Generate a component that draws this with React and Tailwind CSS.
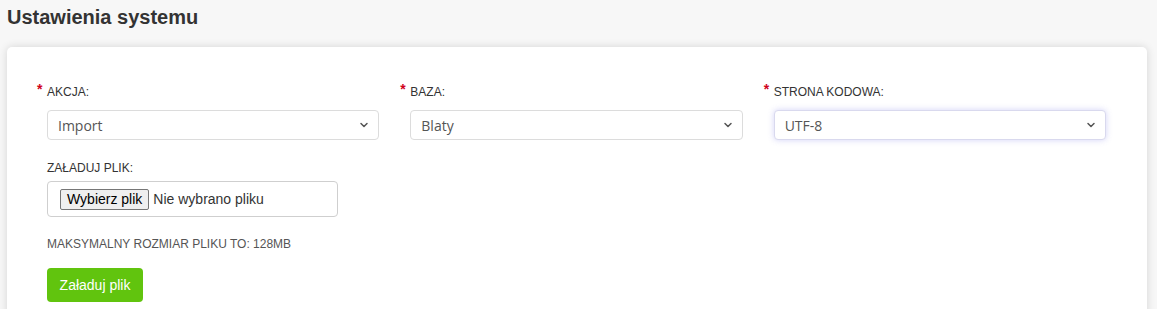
import { ChevronDown } from "lucide-react";

const fields = [
  { label: "AKCJA:", value: "Import" },
  { label: "BAZA:", value: "Blaty" },
  { label: "STRONA KODOWA:", value: "UTF-8", focused: true },
];

const SelectField = ({ label, value, focused }) => (
  <div>
    <label className="relative block text-[12px] leading-[14px] text-[#333] mb-[11px]">
      <span className="absolute -left-[10px] -top-[3px] text-[#d0021b] text-[14px] font-bold">*</span>
      {label}
    </label>
    <div
      className={
        "relative h-[30px] rounded-[4px] border bg-white flex items-center pl-[10px] " +
        (focused
          ? "border-[#d9d9ee] shadow-[0_0_6px_rgba(110,110,230,0.3)]"
          : "border-[#dcdcdc]")
      }
    >
      <span className="font-[family-name:Open_Sans,sans-serif] text-[14px] text-[#555]">{value}</span>
      <ChevronDown size={12} strokeWidth={3} className="absolute right-[8px] text-[#555]" />
    </div>
  </div>
);

const App = () => {
  return (
    <div className="min-h-screen bg-[#f7f7f7] pl-[7px] pr-[10px] pt-[4px] font-[family-name:Liberation_Sans,Arial,sans-serif]">
      <h1 className="text-[20px] leading-[27px] font-bold text-[#333]">Ustawienia systemu</h1>

      <div className="mt-[16px] bg-white rounded-[5px] shadow-[0_0_8px_rgba(0,0,0,0.14)] pl-[40px] pr-[41px] pt-[38px] pb-[20px]">
        <div className="grid grid-cols-3 gap-x-[31px]">
          {fields.map((f) => (
            <SelectField key={f.label} {...f} />
          ))}
        </div>

        <label className="block mt-[21px] text-[12px] leading-[14px] text-[#333]">ZAŁADUJ PLIK:</label>
        <div className="mt-[6px] w-[291px] h-[36px] rounded-[4px] border border-[#cfcfcf] flex items-center pl-[12px] gap-[4px]">
          <button className="h-[21px] px-[6px] rounded-[2px] border border-[#767676] bg-[#efefef] text-[14px] leading-[18px] text-black">
            Wybierz plik
          </button>
          <span className="text-[14px] text-[#333]">Nie wybrano pliku</span>
        </div>

        <p className="mt-[20px] text-[12px] leading-[14px] text-[#555]">MAKSYMALNY ROZMIAR PLIKU TO: 128MB</p>

        <button className="mt-[17px] h-[34px] w-[96px] rounded-[4px] bg-[#61c40e] text-white text-[14px]">
          Załaduj plik
        </button>
      </div>
    </div>
  );
};

export default App;
